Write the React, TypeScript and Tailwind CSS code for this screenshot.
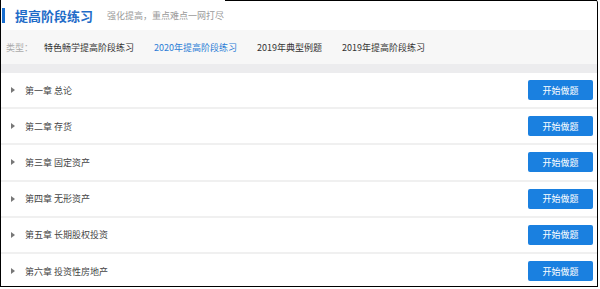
const chapters = [
  "第一章 总论",
  "第二章 存货",
  "第三章 固定资产",
  "第四章 无形资产",
  "第五章 长期股权投资",
  "第六章 投资性房地产",
];

const filters = [
  { label: "特色畅学提高阶段练习", active: false },
  { label: "2020年提高阶段练习", active: true },
  { label: "2019年典型例题", active: false },
  { label: "2019年提高阶段练习", active: false },
];

export default function App() {
  return (
    <div
      className="relative w-[600px] h-[289px] bg-white"
      style={{ fontFamily: '"Microsoft YaHei", "Noto Sans CJK SC", "Noto Sans", sans-serif' }}
    >
      {/* frame of the screenshot */}
      <div className="absolute top-0 left-[225px] right-[3px] h-px bg-black" />
      <div className="w-[598px] h-[287px] overflow-hidden border-l border-r border-b border-black rounded-tr-[3px]">
        {/* Header */}
        <div className="flex items-center h-[30px]">
          <div className="w-[3px] h-[15px] ml-[1px] bg-[#1a6fd0]" />
          <h1 className="ml-[10px] text-[13px] font-bold text-[#1f6cc8] leading-none">提高阶段练习</h1>
          <span className="ml-[14px] text-[9px] text-[#9a9a9a] leading-none">强化提高，重点难点一网打尽</span>
        </div>

        {/* Filter bar */}
        <div className="flex items-center h-[34px] bg-[#f7f7f7] pl-[5px] text-[9px] leading-none">
          <span className="text-[#aaaaaa]">类型：</span>
          <div className="flex items-center gap-[20px] ml-[11px]">
            {filters.map((f) => (
              <span key={f.label} className={f.active ? "text-[#2b7dd6]" : "text-[#333333]"}>
                {f.label}
              </span>
            ))}
          </div>
        </div>
        <div className="h-[9px] bg-[#ececee]" />

        {/* Chapter list */}
        {chapters.map((c) => (
          <div key={c} className="flex items-center h-[36.2px] border-b-2 border-[#f0f0f0] pl-[10px] pr-[4px]">
            <span className="w-0 h-0 border-y-[3px] border-y-transparent border-l-[4px] border-l-[#777777]" />
            <span className="ml-[10px] text-[9px] text-[#444444] leading-none">{c}</span>
            <button className="ml-auto w-[65px] h-[20px] rounded-[2px] bg-[#1a80e0] text-white text-[9px] leading-none">
              开始做题
            </button>
          </div>
        ))}
      </div>
    </div>
  );
}
